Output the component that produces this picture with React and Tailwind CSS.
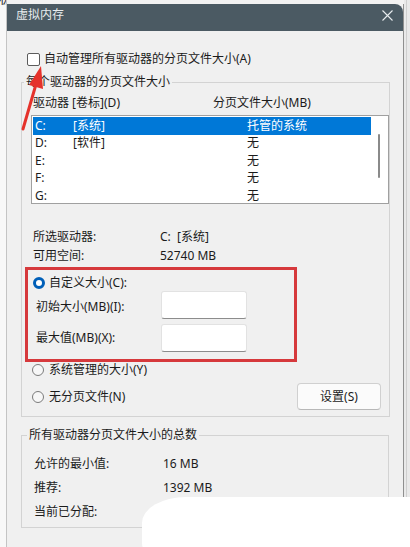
import React from "react";

const drives = [
  { d: "C:", label: "[系统]", size: "托管的系统", selected: true },
  { d: "D:", label: "[软件]", size: "无" },
  { d: "E:", label: "", size: "无" },
  { d: "F:", label: "", size: "无" },
  { d: "G:", label: "", size: "无" },
];

function Radio({ checked }) {
  return checked ? (
    <span className="w-[12px] h-[12px] rounded-full border-[3px] border-[#005fb8] bg-white shrink-0" />
  ) : (
    <span className="w-[12px] h-[12px] rounded-full border border-[#7b7b7b] bg-[#f7f7f7] shrink-0" />
  );
}

function TitleBar() {
  return (
    <div className="h-[27px] bg-[#4b5a63] rounded-tr-[8px] flex items-start pt-[3px] pl-[9px] pr-[10px] text-[#e8ecee]">
      <span>虚拟内存</span>
      <svg className="ml-auto mt-[3px]" width="11" height="11" viewBox="0 0 11 11">
        <path d="M0.5 0.5 L10.5 10.5 M10.5 0.5 L0.5 10.5" stroke="#e8ecee" strokeWidth="1.1" fill="none" />
      </svg>
    </div>
  );
}

function DriveList() {
  return (
    <div className="ml-[9px] mt-[4px] w-[358px] h-[89px] bg-white border border-[#a0a0a0] flex pt-[1px] pl-[1px]">
      <div className="w-[338px]">
        {drives.map((r) => (
          <div
            key={r.d}
            className={`h-[17.5px] flex items-center pl-[2px] ${r.selected ? "bg-[#0078d7] text-white" : ""}`}
          >
            <span className="w-[38px]">{r.d}</span>
            <span className="w-[174px]">{r.label}</span>
            <span>{r.size}</span>
          </div>
        ))}
      </div>
      {/* scrollbar */}
      <div className="flex-1 flex justify-center pt-[17px]">
        <div className="w-[2px] h-[44px] bg-[#8a8a8a] rounded-full ml-[-2px]" />
      </div>
    </div>
  );
}

function SizeInput() {
  return <div className="w-[86px] h-[28px] bg-white border border-[#e2e2e2] border-b-[#8c8c8c] rounded-[3px]" />;
}

function Body() {
  return (
    <div className="flex-1 bg-[#f0f0f0] flex flex-col">
      {/* auto manage checkbox */}
      <div className="mt-[20px] ml-[20px] h-[16px] flex items-center gap-[4px]">
        <span className="w-[13px] h-[13px] bg-white border border-[#5c5c5c] rounded-[2px]" />
        <span>自动管理所有驱动器的分页文件大小(A)</span>
      </div>

      {/* per drive group */}
      <fieldset className="mt-[7px] ml-[14px] w-[368px] border border-[#d3d3d3] pb-[6px]">
        <legend className="ml-[2px] px-[2px] leading-[16px]">每个驱动器的分页文件大小</legend>
        <div className="pt-[5px] h-[21px] flex pl-[11px]">
          <span className="w-[180px]">驱动器 [卷标](D)</span>
          <span>分页文件大小(MB)</span>
        </div>
        <DriveList />

        <div className="mt-[23px] pl-[11px]">
          <div className="h-[19px] flex items-center">
            <span className="w-[127px]">所选驱动器:</span>
            <span>C:&nbsp; [系统]</span>
          </div>
          <div className="h-[19px] flex items-center">
            <span className="w-[127px]">可用空间:</span>
            <span>52740 MB</span>
          </div>
        </div>

        {/* custom size, framed in red */}
        <div className="mt-[2px] ml-[3px] w-[272px] border-[3px] border-[#d6393c] pt-[5px] pb-[7px]">
          <div className="h-[16px] flex items-center gap-[4px] pl-[5px]">
            <Radio checked />
            <span>自定义大小(C):</span>
          </div>
          <div className="h-[28px] flex items-center pl-[8px]">
            <span className="w-[125px] pt-[4px]">初始大小(MB)(I):</span>
            <SizeInput />
          </div>
          <div className="mt-[5px] h-[28px] flex items-center pl-[8px]">
            <span className="w-[125px]">最大值(MB)(X):</span>
            <SizeInput />
          </div>
        </div>

        <div className="h-[16px] flex items-center gap-[5px] pl-[10px]">
          <Radio />
          <span>系统管理的大小(Y)</span>
        </div>
        <div className="mt-[5px] h-[27px] flex items-center gap-[5px] pl-[10px] pr-[8px]">
          <Radio />
          <span>无分页文件(N)</span>
          <button className="ml-auto w-[84px] h-[27px] bg-[#fbfbfb] border border-[#d0d0d0] border-b-[#b8b8b8] rounded-[4px]">
            设置(S)
          </button>
        </div>
      </fieldset>

      {/* totals group */}
      <fieldset className="mt-[10px] ml-[14px] w-[368px] border border-[#d3d3d3] pt-[9px] pb-[3px]">
        <legend className="ml-[5px] px-[2px] leading-[16px]">所有驱动器分页文件大小的总数</legend>
        <div className="pl-[12px]">
          <div className="h-[24px] flex items-center">
            <span className="w-[129px]">允许的最小值:</span>
            <span>16 MB</span>
          </div>
          <div className="h-[24px] flex items-center">
            <span className="w-[129px]">推荐:</span>
            <span>1392 MB</span>
          </div>
          <div className="h-[24px] flex items-center">
            <span className="w-[129px]">当前已分配:</span>
            <span></span>
          </div>
        </div>
      </fieldset>
    </div>
  );
}

export default function App() {
  return (
    <div className="relative w-[410px] h-[547px] overflow-hidden bg-[#f2f2f2] flex font-['Noto_Sans','Noto_Sans_CJK_SC',sans-serif] text-[12px] leading-[16px] text-[#1b1b1b]">
      {/* desktop edge on the left */}
      <div className="w-[7px] shrink-0 bg-[#f8f8f8] border-r border-[#c4c4c4]">
        <div className="h-[6px] overflow-hidden">
          <div className="-mt-[10px] -ml-[1px] text-[14px] leading-[16px] text-[#333]">极</div>
        </div>
      </div>

      {/* dialog window */}
      <div className="w-[397px] shrink-0 mt-[4px] flex flex-col border-r border-[#8f8f8f]">
        <TitleBar />
        <Body />
      </div>

      {/* desktop edge on the right */}
      <div className="flex-1 bg-[#e9e9e9] pl-[2px]">
        <div className="w-[1px] h-full bg-[#cfcfcf]" />
      </div>

      {/* red arrow annotation */}
      <svg className="absolute left-0 top-0 pointer-events-none" width="60" height="140" viewBox="0 0 60 140">
        <line x1="23" y1="129" x2="35.5" y2="86" stroke="#e5322b" strokeWidth="3" strokeLinecap="round" />
        <polygon points="41,66 29,85 43,89" fill="#e5322b" />
      </svg>

      {/* white redaction blob */}
      <div className="absolute left-[142px] top-[497px] w-[290px] h-[60px] bg-white rounded-tl-[44px_26px] rounded-bl-[14px] blur-[0.6px]" />
    </div>
  );
}
